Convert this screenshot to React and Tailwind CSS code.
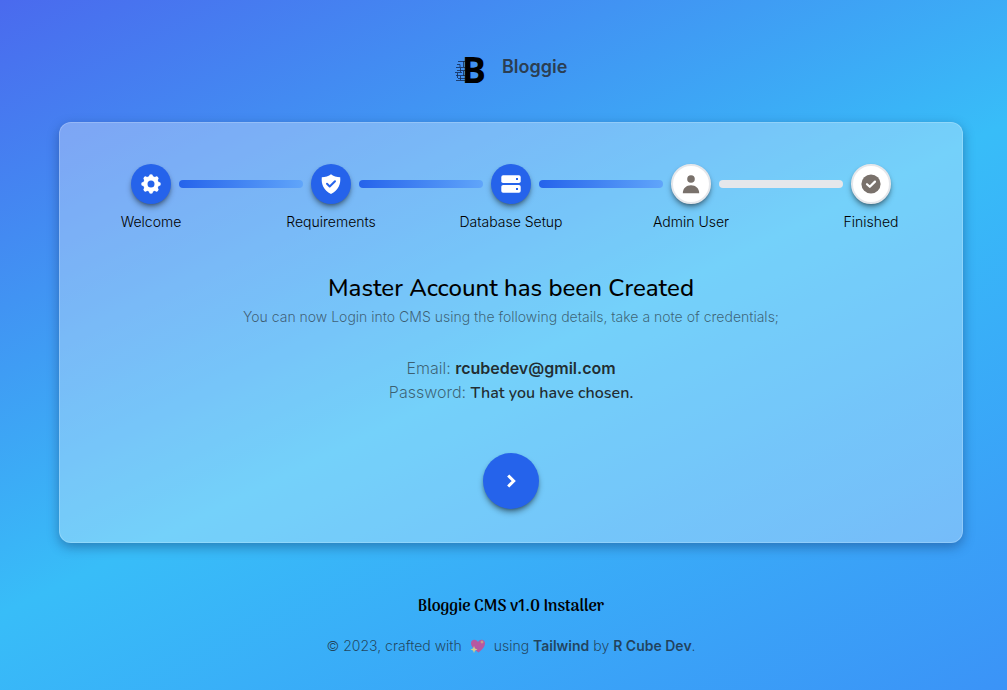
import React from "react";

function GearIcon() {
  const teeth = [0, 45, 90, 135, 180, 225, 270, 315];
  return (
    <svg viewBox="0 0 20 20" className="size-5" aria-hidden="true">
      <circle cx="10" cy="10" r="5.7" fill="none" stroke="currentColor" strokeWidth="4.4" />
      {teeth.map((a) => (
        <circle key={a} cx="10" cy="2.200" r="2" fill="currentColor" transform={`rotate(${a} 10 10)`} />
      ))}
    </svg>
  );
}

function ShieldIcon() {
  return (
    <svg viewBox="0 0 20 20" className="size-5" aria-hidden="true">
      <path d="M10 .2C8 2.100 4 3.200 .8 3.200C.1 10 2.500 16 10 20C17.500 16 19.900 10 19.200 3.200C16 3.200 12 2.100 10 .2Z" fill="currentColor" />
      <path d="M6 9.800L8.700 12.500L14 7.200" fill="none" stroke="#2563eb" strokeWidth="2" strokeLinecap="round" strokeLinejoin="round" />
    </svg>
  );
}

function ServerIcon() {
  return (
    <svg viewBox="0 0 20 20" className="size-5" aria-hidden="true">
      <rect x="0.3" y="1.200" width="19.400" height="7.800" rx="1.800" fill="currentColor" />
      <rect x="0.3" y="11" width="19.400" height="7.800" rx="1.800" fill="currentColor" />
      <rect x="15" y="4" width="2" height="2" fill="#2563eb" />
      <rect x="15" y="14" width="2" height="2" fill="#2563eb" />
    </svg>
  );
}

function UserIcon() {
  return (
    <svg viewBox="0 0 20 20" className="size-5" aria-hidden="true">
      <circle cx="10" cy="5" r="3.800" fill="currentColor" />
      <path d="M1.800 19.300C1.800 14.200 5.300 11.200 10 11.200S18.200 14.200 18.200 19.300Z" fill="currentColor" />
    </svg>
  );
}

function CheckIcon() {
  return (
    <svg viewBox="0 0 20 20" className="size-5" aria-hidden="true">
      <circle cx="10" cy="10" r="9.600" fill="currentColor" />
      <path d="M6 10.200L8.800 12.800L14 7.600" fill="none" stroke="#fff" strokeWidth="2.200" strokeLinecap="round" strokeLinejoin="round" />
    </svg>
  );
}

function HeartIcon() {
  return (
    <svg viewBox="0 0 16 16" className="mx-1 inline-block size-4 align-[-3px] opacity-80" role="img" aria-label="love">
      <path d="M8.500 14.500C3 10.500 1 8 1 5.200C1 1 6 .5 8 4C10 .5 15 1 15 5.200C15 8 13 11 8.500 14.500Z" fill="#d6458c" />
      <path d="M4 8l1 2.500L7.500 11.500L5 12.500L4 15L3 12.500L.5 11.500L3 10.500Z" fill="#f7d774" />
      <path d="M12 2l.6 1.500L14 4l-1.400.6L12 6l-.6-1.400L10 4l1.400-.5Z" fill="#f5b95f" />
    </svg>
  );
}

function Logo() {
  return (
    <span className="flex h-9 items-center" aria-hidden="true">
      <svg viewBox="0 0 10 24" className="h-6 w-[10px]">
        <g stroke="#132a52" strokeWidth="0.8" fill="none">
          <path d="M3 3.500H10M2 6.500H5V9M1 9.500H10M2 12.500H10M0 14.500H7M1 17.500H10M3 20.500H10M1 22.500H10" />
          <path d="M8.500 3V9M5.500 10V14M8.500 13V18M2.500 15V20M5.500 18V22" />
        </g>
      </svg>
      <span className="-ml-[3px] font-['Open_Sans','Noto_Sans',sans-serif] text-4xl leading-9 font-bold text-black">B</span>
    </span>
  );
}

const steps = [
  { label: "Welcome", Icon: GearIcon, done: true, bar: true },
  { label: "Requirements", Icon: ShieldIcon, done: true, bar: true },
  { label: "Database Setup", Icon: ServerIcon, done: true, bar: true },
  { label: "Admin User", Icon: UserIcon, done: false, bar: false },
  { label: "Finished", Icon: CheckIcon, done: false, bar: false },
];

export default function App() {
  return (
    <div className="flex min-h-screen flex-col bg-[linear-gradient(154deg,#4a6aee_0%,#38bdf8_52%,#3b93f7_100%)] pt-[52px] pr-11 pb-8 pl-[59px] font-[Inter,sans-serif] text-neutral-900">
      <header className="flex items-start justify-center gap-4">
        <Logo />
        <h1 className="text-lg leading-[30px] font-semibold text-neutral-800/80">Bloggie</h1>
      </header>

      <main className="mt-[34px] rounded-xl border border-white/20 bg-white/30 pt-[41px] pb-[33px] shadow-[0_4px_12px_rgba(15,40,90,0.4)]">
        <ol className="flex items-start px-[71px]">
          {steps.map(({ label, Icon, done, bar }, i) => (
            <React.Fragment key={label}>
              <li className="flex w-10 flex-col items-center">
                <span
                  className={
                    done
                      ? "flex size-10 shrink-0 items-center justify-center rounded-full bg-[#2563eb] text-white shadow-md shadow-black/40"
                      : "flex size-10 shrink-0 items-center justify-center rounded-full border-2 border-gray-200 bg-white text-stone-500 shadow-md shadow-black/40"
                  }
                >
                  <Icon />
                </span>
                <span className="mt-2 text-sm font-light whitespace-nowrap text-black">{label}</span>
              </li>
              {i < steps.length - 1 && (
                <li
                  aria-hidden="true"
                  className={
                    bar
                      ? "mx-2 mt-4 h-2 flex-1 rounded-full bg-[linear-gradient(to_right,#2563eb,#60a5fa)]"
                      : "mx-2 mt-4 h-2 flex-1 rounded-full bg-gray-200"
                  }
                />
              )}
            </React.Fragment>
          ))}
        </ol>

        <section className="mt-10 flex flex-col items-center text-center">
          <h2 className="font-[Nunito,Lato,sans-serif] text-2xl font-medium text-black">Master Account has been Created</h2>
          <p className="mt-[3px] text-sm font-light text-neutral-900/60">
            You can now Login into CMS using the following details, take a note of credentials;
          </p>
          <p className="mt-[29px] text-base font-light text-neutral-900/60">
            Email: <strong className="font-semibold text-neutral-900/90">rcubedev@gmil.com</strong>
            <br />
            Password: <strong className="font-[Nunito,Lato,sans-serif] font-semibold text-neutral-900/90">That you have chosen.</strong>
          </p>
          <button
            type="button"
            aria-label="Continue"
            className="mt-12 flex size-14 items-center justify-center rounded-full bg-[#2563eb] text-white shadow-md shadow-black/40"
          >
            <svg viewBox="0 0 20 20" className="size-5" aria-hidden="true">
              <path d="M7.200 4.500L12.700 10L7.200 15.500" fill="none" stroke="currentColor" strokeWidth="3" />
            </svg>
          </button>
        </section>
      </main>

      <footer className="mt-[52px] flex flex-col items-center gap-[17px] text-center">
        <p className="font-[Arima,Lato,sans-serif] text-base font-semibold text-black">Bloggie CMS v1.0 Installer</p>
        <p className="text-sm font-light text-neutral-900/70">
          © 2023, crafted with <HeartIcon /> using <a href="#tailwind" className="font-semibold">Tailwind</a> by{" "}
          <a href="#author" className="font-semibold">R Cube Dev</a>.
        </p>
      </footer>
    </div>
  );
}
